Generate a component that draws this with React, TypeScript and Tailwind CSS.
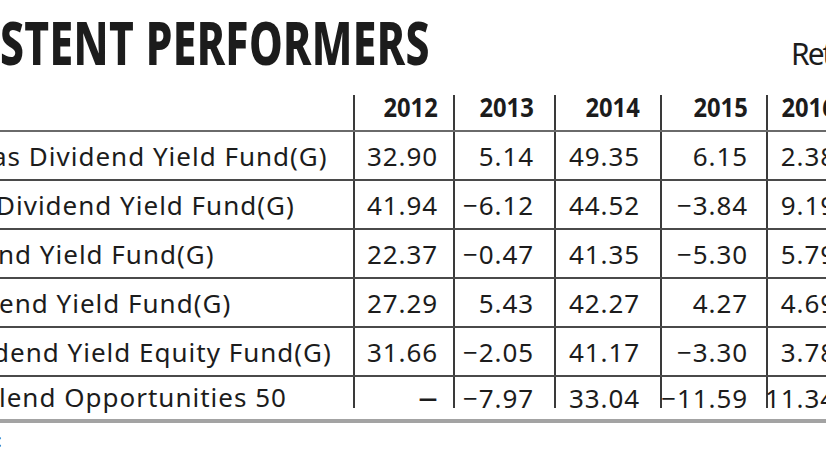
import React from "react";

// Cropped newspaper table: "Consistent performers"
const years = ["2012", "2013", "2014", "2015", "2016"];

const rows = [
  { name: "as Dividend Yield Fund(G)", shift: "ml-[-8px]", vals: ["32.90", "5.14", "49.35", "6.15", "2.38"] },
  { name: "Dividend Yield Fund(G)", shift: "ml-[-4px]", vals: ["41.94", "−6.12", "44.52", "−3.84", "9.19"] },
  { name: "nd Yield Fund(G)", shift: "ml-[-2px]", vals: ["22.37", "−0.47", "41.35", "−5.30", "5.79"] },
  { name: "end Yield Fund(G)", shift: "ml-[-1px]", vals: ["27.29", "5.43", "42.27", "4.27", "4.69"] },
  { name: "dend Yield Equity Fund(G)", shift: "ml-[-7px]", vals: ["31.66", "−2.05", "41.17", "−3.30", "3.78"] },
  { name: "lend Opportunities 50", shift: "ml-[-1px]", vals: ["—", "−7.97", "33.04", "−11.59", "11.34"] },
];

// right padding per year column so the figures line up with the reference
const pad = ["pr-[15px]", "pr-[20px]", "pr-[20px]", "pr-[18px]", "pr-[22px]"];

const grid = "grid grid-cols-[353px_100px_101px_106px_106px_92px]";

const App: React.FC = () => {
  return (
    <div
      className="w-[826px] h-[465px] overflow-hidden bg-white text-[#1c1c1c]"
      style={{ fontFamily: '"Noto Sans", "DejaVu Sans", sans-serif' }}
    >
      {/* Title row */}
      <div className="flex items-baseline pt-[12px] whitespace-nowrap">
        <div className="w-[791px] shrink-0">
          <span className="inline-block origin-left scale-x-[0.71] text-[60px] leading-none font-extrabold tracking-[0.5px]">
            STENT PERFORMERS
          </span>
        </div>
        <span className="shrink-0 text-[30px] leading-none tracking-[-2px]">Returns (%)</span>
      </div>

      {/* Table */}
      <div className="mt-[21px] w-[858px]">
        {/* header */}
        <div className={`${grid} border-b-2 border-[#6a6a6a]`}>
          <div />
          {years.map((y, i) => (
            <div
              key={y}
              className={`h-[35px] mt-[2px] border-l-2 border-[#3a3a3a] text-right ${pad[i]}`}
            >
              <span className="inline-block origin-right scale-x-[0.88] text-[27px] leading-none font-bold -mt-[2px]">
                {y}
              </span>
            </div>
          ))}
        </div>

        {/* body */}
        {rows.map((r, ri) => {
          const last = ri === rows.length - 1;
          return (
            <div
              key={r.name}
              className={
                last
                  ? `${grid} h-[46px] border-b-4 border-[#a3a3a3]`
                  : `${grid} h-[49px] border-b-2 border-[#4a4a4a]`
              }
            >
              <div className="flex items-center overflow-hidden whitespace-nowrap">
                <span className={`${r.shift} text-[26px] leading-none tracking-[1px] ${last ? "translate-y-[-1px]" : ""}`}>
                  {r.name}
                </span>
              </div>
              {r.vals.map((v, i) => (
                <div
                  key={i}
                  className={
                    last
                      ? `h-[31px] border-l-2 border-[#3a3a3a] flex items-center justify-end ${pad[i]}`
                      : `border-l-2 border-[#3a3a3a] flex items-center justify-end ${pad[i]}`
                  }
                >
                  {v === "—" ? (
                    <span className="text-[18px] leading-none font-black translate-y-[5px] mr-[1px]">—</span>
                  ) : (
                    <span
                      className={
                        last
                          ? "text-[26px] leading-none tracking-[0.9px] translate-y-[5px]"
                          : "text-[26px] leading-none tracking-[0.9px]"
                      }
                    >
                      {v}
                    </span>
                  )}
                </div>
              ))}
            </div>
          );
        })}
      </div>

      {/* source line, cut at the left edge */}
      <div className="mt-[8px] ml-[-3px] text-[18px] leading-none">:</div>
    </div>
  );
};

export default App;
